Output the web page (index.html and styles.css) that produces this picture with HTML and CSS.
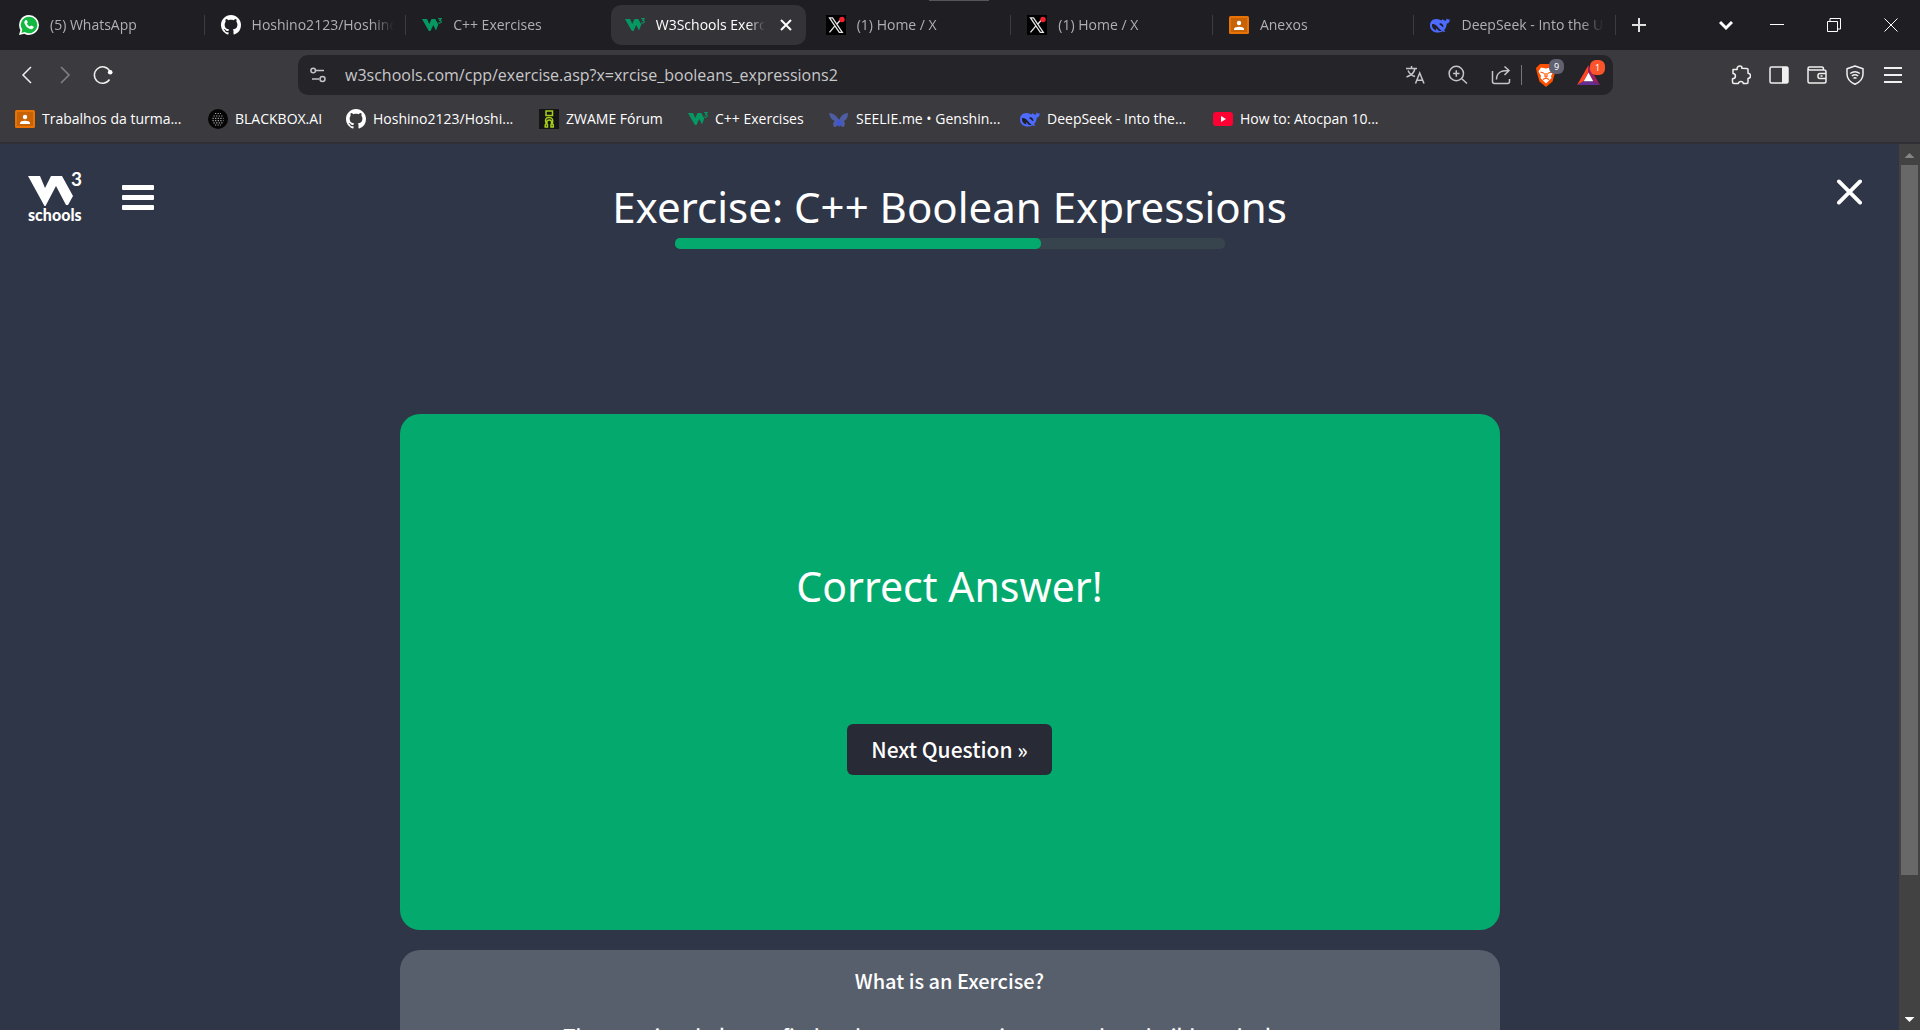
FILE: index.html
```html
<!DOCTYPE html>
<html lang="en">
<head>
<meta charset="utf-8">
<title>W3Schools Exercise</title>
<link rel="stylesheet" href="styles.css">
</head>
<body>
<svg class="defs" aria-hidden="true">
  <symbol id="i-whatsapp" viewBox="0 0 20 20"><path fill="#fff" d="M10 0a10 10 0 0 1 0 20 10 10 0 0 1-4.700-1.200L0 20l1.400-5A10 10 0 0 1 10 0z"/><path fill="#12b83f" d="M10 1.700a8.300 8.300 0 1 1-4.300 15.400l-3.300.9.900-3.200A8.300 8.300 0 0 1 10 1.700z"/><path fill="#fff" d="M6.300 5.300c.5-.5 1.300-.6 1.600 0l.8 1.900c.1.500-.9 1.200-.8 1.500.7 1.300 1.700 2.200 3 2.800.5.200 1.100-1.100 1.500-1l2 1c.5.300.2 1.500-.5 2.100-1 .8-2.400.6-3.900 0A9 9 0 0 1 5.700 9c-.7-1.600-.2-3 .6-3.700z"/></symbol>
  <symbol id="i-github" viewBox="0 0 16 16"><path fill="#fff" d="M8 0C3.580 0 0 3.580 0 8c0 3.540 2.290 6.530 5.470 7.590.4.070.55-.17.55-.38 0-.19-.01-.82-.01-1.490-2.010.37-2.530-.49-2.690-.94-.09-.23-.48-.94-.82-1.130-.28-.15-.68-.52-.01-.53.63-.01 1.080.58 1.230.82.720 1.210 1.870.87 2.330.66.070-.52.280-.87.510-1.070-1.780-.2-3.640-.89-3.640-3.950 0-.87.310-1.590.82-2.150-.08-.2-.36-1.020.08-2.120 0 0 .67-.21 2.200.82.640-.18 1.320-.27 2-.27s1.360.09 2 .27c1.530-1.040 2.200-.82 2.200-.82.440 1.100.16 1.920.08 2.120.51.560.82 1.270.82 2.150 0 3.070-1.870 3.750-3.650 3.950.29.25.54.73.54 1.480 0 1.070-.01 1.930-.01 2.200 0 .21.15.46.55.38A8.010 8.010 0 0 0 16 8c0-4.420-3.580-8-8-8z"/></symbol>
  <symbol id="i-w3" viewBox="0 0 20 20"><path fill="#059862" d="M0 4h5l2.300 5L9.500 4h3.800l3 5.500L14 15.500 11.300 10 8.500 16h-1.600z"/><path fill="none" stroke="#059862" stroke-width="1.200" d="M16.200 3.600h3L17.700 5.500q2 .2 1.400 1.800-.9 1.400-2.900.5"/></symbol>
  <symbol id="i-x" viewBox="0 0 20 20"><path fill="#000" d="M0 0h20v20H0z"/><path fill="none" stroke="#e5e5e5" stroke-width="1.300" d="M3.500 2.800h3l9.800 14.600h-3zM16.400 2.800 11 9M8.700 11.200 3.500 17.400"/><circle cx="16" cy="4.500" r="2.700" fill="#f4212e"/></symbol>
  <symbol id="i-class" viewBox="0 0 20 20"><rect y="1" width="20" height="18" rx="1.500" fill="#e87204"/><rect x="2" y="3" width="16" height="14" fill="#c76305"/><circle cx="10" cy="8" r="2.200" fill="#fff"/><path fill="#fff" d="M5 15v-1c0-3 10-3 10 0v1z"/></symbol>
  <symbol id="i-deepseek" viewBox="0 0 20 20"><path fill="#4d6bfe" d="M19.700 4.200c-1 .5-1.500.3-2.300-.3-.3-.2-.6-.7-.9-.2-.4 1.200.2 2.200-1.300 1.900-1.300-.3-2-1.200-3.200-1.700.2 1.500 0 1.600-1 1.300C3.800 2.200 0 5.800 0 10.500c0 4.800 3.800 7 7.200 7 2.200 0 3.800-.3 5.300-1.300.7.500 2.400.7 2.900.4-.1-.9-1.300-.6-1.500-1.300 2-1.900 2.700-4.200 2.900-6.800 1.900-.3 3-1.500 3-4.300z"/><path fill="#1f1e23" d="M2 9.200c1.700-.6 3.800.4 5.600 2.500 1.600 1.800 2.800 3.400 4.200 3.800-3.300 1.500-3.900-.7-5.300-2.200-.8.300-.3 1.500 0 2.200-2.600-.6-4.800-2.500-4.500-6.300zM9.500 8.400c2.300-.5 4.300 1.300 3.900 4-.8-.4-1-.3-1.800-1.300-.6-.8-1-1-2-1.400z"/></symbol>
  <symbol id="i-translate" viewBox="0 0 20 20"><path fill="none" stroke="currentColor" stroke-width="1.500" d="M1 3.500h11M6.500 1v2.500M3 5.500c1.300 3 3.500 5 7 6M9.800 4c-.7 4-3.700 6.500-8.300 8M10.500 18.500 14.700 8l4.300 10.500M12 15.200h5.500"/></symbol>
  <symbol id="i-zoom" viewBox="0 0 20 20"><path fill="none" stroke="currentColor" stroke-width="1.500" d="M15.500 8.500a7.200 7.200 0 1 1-14.400 0 7.200 7.200 0 0 1 14.400 0zM13.500 13.500l5.500 5M8.300 5.300v6.400M5.100 8.500h6.400"/></symbol>
  <symbol id="i-share" viewBox="0 0 20 20"><path fill="none" stroke="currentColor" stroke-width="1.500" d="M1.500 6v10.500q0 2 2 2h13q2 0 2-2V14M5.500 14.500C5.500 8 9 5.500 17.500 5.500M13.500 1.500l4.500 4-4.500 4.500"/></symbol>
  <symbol id="i-puzzle" viewBox="0 0 20 20"><path fill="none" stroke="currentColor" stroke-width="1.500" stroke-linejoin="round" d="M2 4.500h4.200C5.300 0 11.700 0 10.800 3.200l5.200.3q1 0 1 1v3.700c3.400.2 3.400 5 0 5.200v3.800q0 1.300-1.200 1.300h-3.400c-.5-2.700-4.600-2.700-5 0H3q-1.500 0-1.500-1.500v-3.200c3.800-.2 3.800-5.100.5-5.300z"/></symbol>
  <symbol id="i-panel" viewBox="0 0 20 20"><rect x="1" y="2" width="18" height="16" rx="1.500" fill="none" stroke="currentColor" stroke-width="1.500"/><path fill="currentColor" d="M13 2h6v16h-6z"/></symbol>
  <symbol id="i-wallet" viewBox="0 0 20 20"><path fill="none" stroke="currentColor" stroke-width="1.500" d="M1 3.500q0-1.500 1.500-1.500H15q1.500 0 1.500 2.500M1 3.500q0 1.500 2 1.500h14q2 0 2 2v9.500q0 1.500-1.500 1.500h-15Q1 18 1 16.500zM19 8.500h-6q-2 0-2 2v1q0 2 2 2h6M13.500 11h2"/></symbol>
  <symbol id="i-shield" viewBox="0 0 20 20"><path fill="none" stroke="currentColor" stroke-width="1.500" stroke-linejoin="round" d="M10 1 18 3.800V9c0 5-3.500 8.300-8 10.300C5.500 17.300 2 14 2 9V3.800zM5.200 8.500q4.800-3.500 9.600 0M6.800 11q3.200-2.300 6.400 0M8.500 13.300q1.500-1 3 0"/></symbol>
</svg>
<div class="window">
  <header class="tabstrip">
    <span class="grip"></span>
    <nav class="tabs" aria-label="Tabs">
      <a class="tab" href="#"><svg class="fav"><use href="#i-whatsapp"/></svg><span class="label">(5) WhatsApp</span></a>
      <a class="tab" href="#"><svg class="fav"><use href="#i-github"/></svg><span class="label">Hoshino2123/Hoshino</span></a>
      <a class="tab plain" href="#"><svg class="fav"><use href="#i-w3"/></svg><span class="label">C++ Exercises</span></a>
      <div class="tab active"><svg class="fav"><use href="#i-w3"/></svg><span class="label">W3Schools Exercise</span><button class="tab-close" aria-label="Close tab"><svg viewBox="0 0 12 12"><path d="M1 1l10 10M11 1L1 11"/></svg></button></div>
      <a class="tab" href="#"><svg class="fav"><use href="#i-x"/></svg><span class="label">(1) Home / X</span></a>
      <a class="tab" href="#"><svg class="fav"><use href="#i-x"/></svg><span class="label">(1) Home / X</span></a>
      <a class="tab" href="#"><svg class="fav"><use href="#i-class"/></svg><span class="label">Anexos</span></a>
      <a class="tab" href="#"><svg class="fav"><use href="#i-deepseek"/></svg><span class="label">DeepSeek - Into the Unknown</span></a>
    </nav>
    <button class="new-tab" aria-label="New tab"><svg viewBox="0 0 14 14"><path d="M7 0v14M0 7h14"/></svg></button>
    <div class="controls">
      <button class="search-tabs" aria-label="Search tabs"><svg viewBox="0 0 14 14"><path d="M1 4l6 6 6-6"/></svg></button>
      <button aria-label="Minimize"><svg viewBox="0 0 14 14"><path d="M0 6.500h14"/></svg></button>
      <button aria-label="Restore"><svg viewBox="0 0 14 14"><path d="M.5 3.500h10v10H.5zM3 3V.5h10.500V11H11"/></svg></button>
      <button aria-label="Close"><svg viewBox="0 0 14 14"><path d="M.5.500l13 13M13.500.500l-13 13"/></svg></button>
    </div>
  </header>

  <div class="toolbar">
    <div class="history">
      <button aria-label="Back"><svg viewBox="0 0 20 20"><path d="M14 2 6 10l8 8"/></svg></button>
      <button class="dim" aria-label="Forward"><svg viewBox="0 0 20 20"><path d="M6 2l8 8-8 8"/></svg></button>
      <button aria-label="Reload"><svg viewBox="0 0 20 20"><path d="M16.500 14.500A8.200 8.200 0 1 1 16.700 6"/><circle cx="17.200" cy="7.300" r="2.300"/></svg></button>
    </div>
    <div class="omnibox">
      <svg class="site" viewBox="0 0 16 16"><path d="M6 3.500h8M2 12h7"/><circle cx="3.200" cy="3.500" r="2.300"/><circle cx="12.500" cy="12" r="2.500"/></svg>
      <div class="url"><label class="hidden" for="address">Address</label><input id="address" type="text" value="w3schools.com/cpp/exercise.asp?x=xrcise_booleans_expressions2"></div>
      <div class="page-tools">
        <button aria-label="Translate"><svg><use href="#i-translate"/></svg></button>
        <button aria-label="Zoom"><svg><use href="#i-zoom"/></svg></button>
        <button aria-label="Share"><svg><use href="#i-share"/></svg></button>
      </div>
      <span class="divider"></span>
      <button class="ext brave" aria-label="Brave Shields"><svg viewBox="0 0 20 24"><path fill="#ff5000" d="M4 1h12l4 4-1 5-2.500 8.500L10 24l-6.500-5.500L1 10 0 5z"/><path fill="#fff" d="M5 4.500l5 1 5-1 2.500 4L15 13l.5 2-5.500 5.500L4.500 15l.5-2-2.500-4.500z"/><path fill="none" stroke="#ff5000" stroke-width="1.200" d="M4.500 9l3.500 1.200M15.500 9 12 10.200M9 10v3.500l1 .8 1-.8V10M7 16.500l3-1.500 3 1.500"/></svg><span class="badge">9</span></button>
      <button class="ext rewards" aria-label="Rewards"><svg viewBox="0 0 24 21"><path fill="#ff4724" d="M12 0v8L7 17l-7 4z"/><path fill="#9e1f63" d="M12 0l12 21-7-4-5-9z"/><path fill="#662d91" d="M0 21l7-4h10l7 4z"/><path fill="#fff" d="M12 8l5 9H7z"/></svg><span class="badge">1</span></button>
    </div>
    <div class="actions">
      <button aria-label="Extensions"><svg><use href="#i-puzzle"/></svg></button>
      <button aria-label="Sidebar"><svg><use href="#i-panel"/></svg></button>
      <button aria-label="Wallet"><svg><use href="#i-wallet"/></svg></button>
      <button aria-label="VPN"><svg><use href="#i-shield"/></svg></button>
      <button aria-label="Menu"><svg viewBox="0 0 20 20"><path fill="none" stroke="currentColor" stroke-width="2" d="M1 3h18M1 10h18M1 17h18"/></svg></button>
    </div>
  </div>

  <nav class="bookmarks" aria-label="Bookmarks">
    <a href="#"><svg class="fav"><use href="#i-class"/></svg>Trabalhos da turma...</a>
    <a href="#"><svg class="fav" viewBox="0 0 20 20"><circle cx="10" cy="10" r="10" fill="#050505"/><path fill="none" stroke="#aaa" stroke-width="1.200" stroke-dasharray="1.200 1.400" d="M7 4.500h6M5.500 7h9M4.500 9.300h11M4.500 11.600h11M5.500 13.800h9M7 16h6"/></svg>BLACKBOX.AI</a>
    <a href="#"><svg class="fav"><use href="#i-github"/></svg>Hoshino2123/Hoshi...</a>
    <a href="#"><svg class="fav" viewBox="0 0 20 20"><path fill="#151515" d="M0 0h20v20H0z"/><path fill="none" stroke="#a6ce1c" stroke-width="1.500" d="M7 2h6.500v4.500H7zM8.500 18H6.200v-2l1-1.500Q5 8.500 10 8.500t3.300 6l1 1.500v2H12v-2.500l.5-1q.5-3.500-2.300-3.500T8 14.500l.5 1z"/></svg>ZWAME Fórum</a>
    <a href="#"><svg class="fav"><use href="#i-w3"/></svg>C++ Exercises</a>
    <a href="#"><svg class="fav" viewBox="0 0 20 20"><path fill="#4f5da3" d="M0 4q6 0 10 7 3-7 9-7 0 6-4 8 2 3-.5 6-3 0-4.500-4-1.500 4-5 4-2-3 .5-6Q1 10 0 4z"/><path fill="#3f55d8" d="M10 10l3 4-3 4-3-4z"/></svg>SEELIE.me • Genshin...</a>
    <a href="#"><svg class="fav"><use href="#i-deepseek"/></svg>DeepSeek - Into the...</a>
    <a href="#"><svg class="fav" viewBox="0 0 20 20"><rect y="3" width="20" height="14" rx="3" fill="#ff0033"/><path fill="#fff" d="M8 7l5 3-5 3z"/></svg>How to: Atocpan 10...</a>
  </nav>

  <div class="viewport">
    <main class="page">
      <div class="topbar">
        <a class="logo" href="#" aria-label="W3Schools home">
          <svg viewBox="0 0 54 54"><path fill="#fff" d="M0 4h12l5 12 6-12h11l11 20-5 9-2 0L28 14 17.500 34h-1z"/><text x="43" y="14" class="three">3</text><text x="0" y="49" class="word">schools</text></svg>
        </a>
        <button class="menu" aria-label="Menu"><span></span><span></span><span></span></button>
        <div class="heading">
          <h1>Exercise: C++ Boolean Expressions</h1>
          <div class="progress"><div class="bar" style="width: 66.600%"></div></div>
        </div>
        <button class="close" aria-label="Close exercise"><svg viewBox="0 0 26 26"><path d="M2 2l22 22M24 2L2 24"/></svg></button>
      </div>
      <section class="result">
        <h2>Correct Answer!</h2>
        <button class="next">Next Question »</button>
      </section>
      <section class="about">
        <h3>What is an Exercise?</h3>
        <p>The exercises help you find and correct errors in your code or build on the lessons</p>
      </section>
    </main>
    <div class="scrollbar" aria-hidden="true"><span class="up"></span><span class="track"><span class="thumb"></span></span><span class="down"></span></div>
  </div>
</div>
</body>
</html>
```
FILE: styles.css
```css
* { box-sizing: border-box; }
body { margin: 0; background: #2e3647; font-family: "Noto Sans", sans-serif; color: #fff; }
button { padding: 0; border: 0; background: none; color: inherit; font: inherit; cursor: pointer; }
a { color: inherit; text-decoration: none; }
svg { display: block; }
h1, h2, h3, p { margin: 0; }
.defs { position: absolute; width: 0; height: 0; }
.hidden { position: absolute; width: 1px; height: 1px; overflow: hidden; clip-path: inset(50%); }
.window { display: flex; flex-direction: column; height: 100vh; overflow: hidden; }
.fav { flex: none; width: 20px; height: 20px; }

.tabstrip { position: relative; display: flex; align-items: center; flex: none; height: 50px; padding-left: 5px; background: #1f1e23; }
.grip { position: absolute; top: 0; left: 929px; width: 60px; height: 1px; background: #55555a; }
.tabs { display: flex; flex: 0 1 1613px; min-width: 0; }
.tab { position: relative; display: flex; align-items: center; flex: 1 1 202px; min-width: 0; height: 40px; padding: 0 14px; gap: 11px; color: #b0b0b3; font: 400 14px/20px "Open Sans", sans-serif; }
.tab::after { content: ""; position: absolute; right: 2px; top: 10px; width: 1px; height: 20px; background: #3c3b40; }
.tab.plain::after, .tab.active::after { display: none; }
.label { flex: 1; overflow: hidden; white-space: nowrap; mask-image: linear-gradient(90deg, #000 84%, transparent); }
.active { flex: 0 0 195px; margin: 0 6px 0 1px; border-radius: 10px; background: #343338; color: #fff; }
.tab-close { width: 12px; margin-left: 4px; }
.tab-close path { stroke: #fff; stroke-width: 2; }
.new-tab { width: 14px; margin-left: 14px; }
.new-tab path { stroke: #e0e0e0; stroke-width: 2; }
.controls { display: flex; gap: 43px; margin-left: auto; padding-right: 22px; }
.controls svg { width: 14px; height: 14px; }
.controls path { fill: none; stroke: #fff; stroke-width: 1; }
.controls .search-tabs { margin-right: -6px; }
.controls .search-tabs path { stroke-width: 3; }

.toolbar { display: flex; align-items: center; flex: none; height: 50px; background: #3b3a3e; }
.history { display: flex; flex: none; gap: 18px; width: 298px; padding-left: 17px; }
.history svg { width: 20px; height: 20px; fill: none; stroke: #f0f0f0; stroke-width: 1.500; }
.history circle { fill: #fff; stroke: none; }
.history .dim { opacity: .4; }
.omnibox { display: flex; align-items: center; flex: 1; min-width: 0; height: 40px; padding: 0 13px 0 12px; border-radius: 10px; background: #252429; }
.site { flex: none; width: 16px; height: 16px; margin-right: 19px; fill: none; stroke: #c5c5c8; stroke-width: 1.500; }
.url { flex: 1; min-width: 0; }
.url input { width: 100%; padding: 0; border: 0; outline: 0; background: none; color: #c8c8ca; font: 400 16px/24px "Open Sans", sans-serif; }
.page-tools { display: flex; gap: 23px; color: #c5c5c8; }
.page-tools svg, .actions svg { width: 20px; height: 20px; }
.divider { width: 1px; height: 20px; margin: 0 14px 0 10px; background: #77777b; }
.ext { position: relative; }
.brave svg { width: 20px; height: 24px; }
.rewards { margin-left: 21px; }
.rewards svg { width: 23px; height: 20px; }
.badge { position: absolute; top: -4px; left: 13px; width: 15px; height: 15px; border-radius: 6px; background: #5f6070; font: 9px/15px "Noto Sans", sans-serif; }
.rewards .badge { top: -5px; background: #fb542b; }
.actions { display: flex; flex: none; gap: 18px; margin-left: 118px; padding-right: 17px; color: #f0f0f0; }

.bookmarks { display: grid; grid-template-columns: 193px 138px 193px 149px 141px 191px 193px auto; align-items: center; flex: none; height: 44px; padding: 0 0 5px 15px; border-bottom: 2px solid #2f2f35; background: #3b3a3e; font: 400 14px/20px "Open Sans", sans-serif; white-space: nowrap; }
.bookmarks a { display: flex; align-items: center; gap: 7px; }

.viewport { display: flex; flex: 1; min-height: 0; }
.page { flex: 1; min-width: 0; overflow: hidden; }
.topbar { display: grid; grid-template-columns: 94px 1fr auto 1fr 26px; align-items: start; padding: 28px 36px 0 28px; }
.logo svg { width: 54px; height: 54px; overflow: visible; }
.three { fill: #fff; font: 700 19px "Lato", sans-serif; }
.word { fill: #fff; font: 900 16px "Lato", sans-serif; }
.menu { display: flex; flex-direction: column; gap: 5px; width: 32px; margin-top: 13px; }
.menu span { width: 32px; height: 5px; border-radius: 1px; background: #fff; }
.heading { display: flex; flex-direction: column; align-items: center; margin-right: 60px; }
h1, h2 { font: 400 42px/60px "Noto Sans", sans-serif; white-space: nowrap; }
h1 { margin-top: 5px; }
h2 { font-size: 41px; }
.progress { width: 550px; height: 11px; margin-top: 1px; border-radius: 5px; background: #38444d; }
.bar { height: 11px; border-radius: 5px; background: #04aa6d; }
.close { grid-column: 5; margin-top: 7px; }
.close svg { width: 25px; height: 26px; }
.close path { stroke: #fff; stroke-width: 4; stroke-linecap: round; }
.result, .about { max-width: 1100px; margin: 0 auto 20px; border-radius: 20px; text-align: center; }
.result { display: flex; flex-direction: column; align-items: center; min-height: 516px; margin-top: 165px; padding-top: 142px; background: #04aa6d; }
.next { height: 51px; margin-top: 108px; padding: 0 24px; border-radius: 6px; background: #282a35; font: 500 21px/51px "Noto Sans CJK SC", sans-serif; }
.about { min-height: 240px; padding: 16px 20px; background: #585f6c; font: 500 20px/30px "Noto Sans CJK SC", sans-serif; }
.about h3 { margin-bottom: 25px; font: inherit; }

.scrollbar { display: flex; flex-direction: column; align-items: center; flex: none; width: 21px; background: #424242; }
.up, .down { flex: none; width: 10px; height: 5px; background: #858585; clip-path: polygon(50% 0, 100% 100%, 0 100%); }
.up { margin: 9px 0 7px; }
.down { margin: 7px 0 8px; background: #fff; clip-path: polygon(0 0, 100% 0, 50% 100%); }
.track { flex: 1; width: 17px; }
.thumb { display: block; height: 84%; background: #686868; }
```
